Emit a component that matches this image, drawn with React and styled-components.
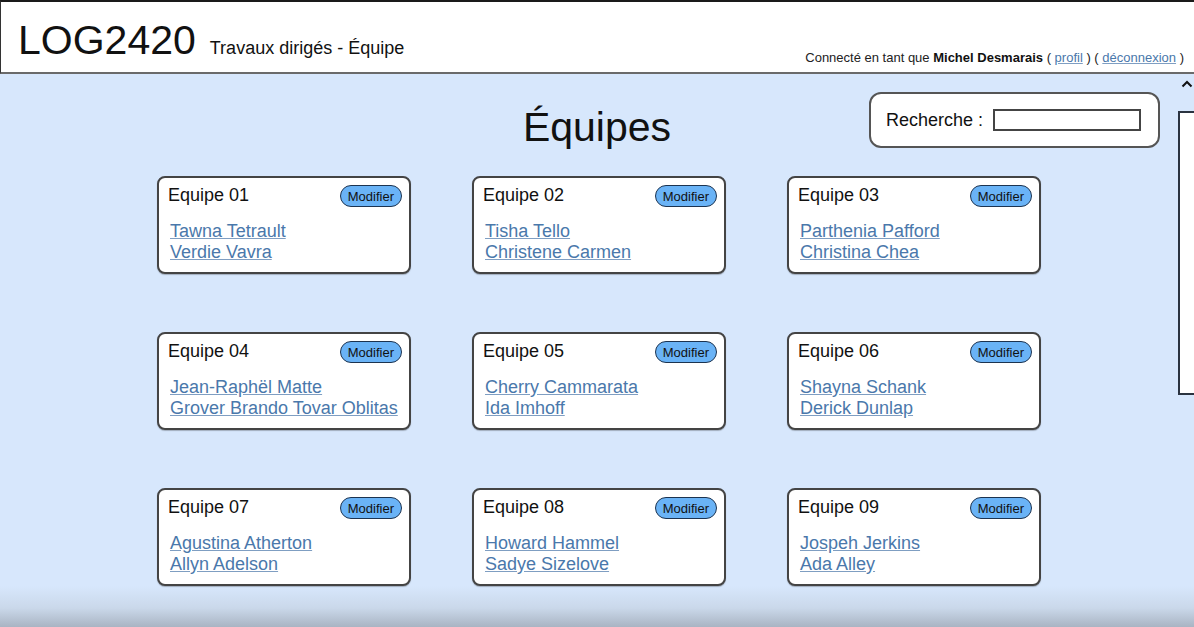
import React from 'react';
import styled, { createGlobalStyle } from 'styled-components';

const GlobalStyle = createGlobalStyle`
  html, body {
    margin: 0;
    padding: 0;
    height: 100%;
    overflow: hidden;
  }
  body {
    font-family: Arial, "Liberation Sans", Helvetica, sans-serif;
    color: #111;
  }
  #root {
    height: 100%;
  }
`;

const Page = styled.div`
  display: flex;
  flex-direction: column;
  height: 627px;
  width: 1194px;
  overflow: hidden;
`;

const Header = styled.header`
  box-sizing: border-box;
  height: 74px;
  flex: none;
  display: flex;
  align-items: flex-end;
  justify-content: space-between;
  padding: 0 10px 11px 17px;
  background: #fff;
  border-top: 2px solid #1a1a1a;
  border-left: 1px solid #333;
  border-bottom: 2px solid #6a6a6a;
`;

const Brand = styled.div`
  display: flex;
  align-items: baseline;
  gap: 14px;
`;

const Course = styled.h1`
  margin: 0;
  font-size: 41px;
  font-weight: normal;
  line-height: 1;
`;

const Subtitle = styled.span`
  font-size: 18px;
`;

const UserInfo = styled.div`
  font-size: 13px;
  margin-bottom: -4px;
  color: #222;

  b {
    color: #111;
  }
`;

const TextLink = styled.a`
  color: #4a78ab;
  text-decoration: underline;
  text-decoration-color: #7f9ec2;
`;

const Main = styled.main`
  position: relative;
  flex: 1;
  background: linear-gradient(
    to bottom,
    #d7e7fc 0,
    #d7e7fc 512px,
    #cad8ea 534px,
    #a9b4c3 553px
  );
`;

const TopRow = styled.div`
  display: grid;
  grid-template-columns: 1fr auto 1fr;
  align-items: start;
  padding: 18px 0 0 0;
`;

const PageTitle = styled.h2`
  grid-column: 2;
  margin: 15px 0 0;
  font-size: 41px;
  font-weight: normal;
  line-height: 1;
  color: #111;
`;

const SearchBox = styled.div`
  grid-column: 3;
  justify-self: end;
  margin-right: 34px;
  box-sizing: border-box;
  width: 291px;
  height: 56px;
  display: flex;
  align-items: center;
  justify-content: space-between;
  padding: 0 17px 0 15px;
  background: #fff;
  border: 2px solid #555;
  border-radius: 12px;
  font-size: 18px;
`;

const SearchInput = styled.input`
  box-sizing: border-box;
  width: 148px;
  height: 22px;
  border: 2px solid #444;
  background: #fff;
  padding: 0 4px;
  outline: none;
`;

const Grid = styled.div`
  display: grid;
  grid-template-columns: repeat(3, 254px);
  grid-auto-rows: 98px;
  column-gap: 61px;
  row-gap: 58px;
  justify-content: center;
  padding: 28px 0 0 4px;
`;

const Card = styled.div`
  box-sizing: border-box;
  background: #fff;
  border: 2px solid #444;
  border-radius: 8px;
  padding: 6px 7px 0 9px;
  box-shadow: 0 1px 1px rgba(0, 0, 0, 0.25);
`;

const CardHead = styled.div`
  display: flex;
  align-items: center;
  justify-content: space-between;
  height: 24px;
`;

const CardTitle = styled.span`
  font-size: 18px;
  margin-top: -2px;
`;

const ModifyButton = styled.button`
  box-sizing: border-box;
  height: 22px;
  padding: 0 7px;
  font-family: inherit;
  font-size: 13px;
  color: #111;
  background: #6ab3f6;
  border: 1.5px solid #1c3350;
  border-radius: 11px;
  cursor: pointer;
`;

const Members = styled.div`
  display: flex;
  flex-direction: column;
  align-items: flex-start;
  margin-top: 13px;
  padding-left: 2px;
`;

const MemberLink = styled(TextLink)`
  font-size: 18px;
  line-height: 21px;
`;

const SidePanel = styled.aside`
  position: absolute;
  right: -12px;
  top: 37px;
  width: 24px;
  height: 280px;
  background: #fff;
  border: 2px solid #2a3340;
`;

const Caret = styled.svg`
  position: absolute;
  right: 1px;
  top: 6px;
`;

const teams = [
  ['Equipe 01', ['Tawna Tetrault', 'Verdie Vavra']],
  ['Equipe 02', ['Tisha Tello', 'Christene Carmen']],
  ['Equipe 03', ['Parthenia Pafford', 'Christina Chea']],
  ['Equipe 04', ['Jean-Raphël Matte', 'Grover Brando Tovar Oblitas']],
  ['Equipe 05', ['Cherry Cammarata', 'Ida Imhoff']],
  ['Equipe 06', ['Shayna Schank', 'Derick Dunlap']],
  ['Equipe 07', ['Agustina Atherton', 'Allyn Adelson']],
  ['Equipe 08', ['Howard Hammel', 'Sadye Sizelove']],
  ['Equipe 09', ['Jospeh Jerkins', 'Ada Alley']],
];

export default function App() {
  return (
    <Page>
      <GlobalStyle />
      <Header>
        <Brand>
          <Course>LOG2420</Course>
          <Subtitle>Travaux dirigés - Équipe</Subtitle>
        </Brand>
        <UserInfo>
          Connecté en tant que <b>Michel Desmarais</b> ( <TextLink href="#">profil</TextLink> ) ({' '}
          <TextLink href="#">déconnexion</TextLink> )
        </UserInfo>
      </Header>
      <Main>
        <Caret width="12" height="8" viewBox="0 0 12 8">
          <path d="M1.5 6.5 L6 2 L10.5 6.5" fill="none" stroke="#111" strokeWidth="2" />
        </Caret>
        <TopRow>
          <PageTitle>Équipes</PageTitle>
          <SearchBox>
            <span>Recherche :</span>
            <SearchInput type="text" />
          </SearchBox>
        </TopRow>
        <Grid>
          {teams.map(([name, members]) => (
            <Card key={name}>
              <CardHead>
                <CardTitle>{name}</CardTitle>
                <ModifyButton>Modifier</ModifyButton>
              </CardHead>
              <Members>
                {members.map((m) => (
                  <MemberLink key={m} href="#">{m}</MemberLink>
                ))}
              </Members>
            </Card>
          ))}
        </Grid>
        <SidePanel />
      </Main>
    </Page>
  );
}
